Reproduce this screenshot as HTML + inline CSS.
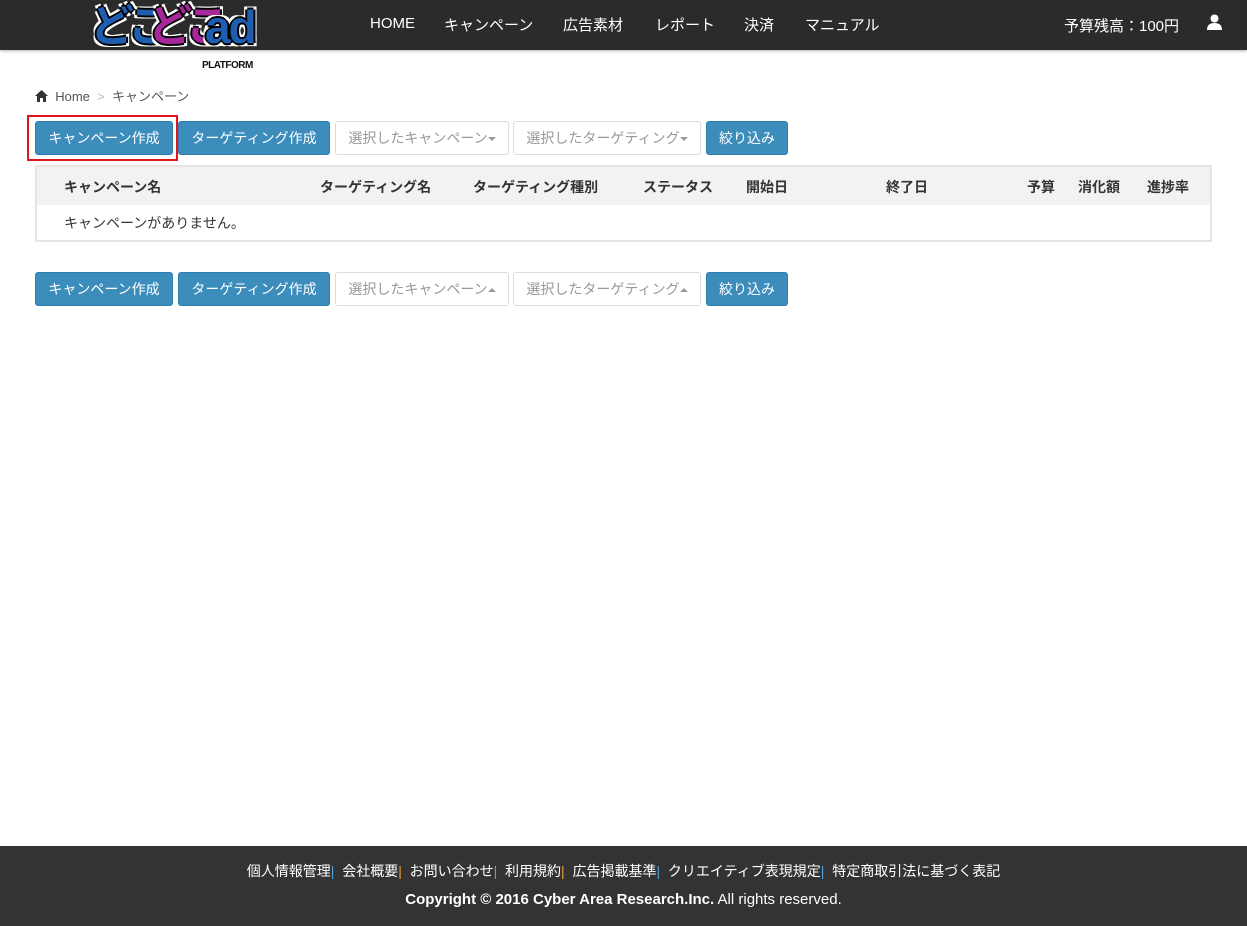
<!DOCTYPE html>
<html><head><meta charset="utf-8"><style>
*{box-sizing:border-box;margin:0;padding:0}
body{width:1247px;height:926px;position:relative;background:#fff;font-family:"Liberation Sans","Noto Sans CJK JP",sans-serif;font-size:14px;color:#333;overflow:hidden}
.nav{position:absolute;left:0;top:0;width:1247px;height:50px;background:#2b2b2b;box-shadow:0 1px 3px rgba(0,0,0,.3)}
.nav a{position:absolute;top:14px;color:#fff;font-size:15px}
.logo{position:absolute;left:86px;top:2px;height:68px;width:170px}
.logo .t{position:absolute;top:0;font-weight:bold;font-size:44px;line-height:50px;letter-spacing:-5px;text-shadow:2px 0 #000,-2px 0 #000,0 2px #000,0 -2px #000,3px 3px #fff,-3px -3px #fff,3px -3px #fff,-3px 3px #fff}
.logo .p{position:absolute;left:116px;top:58px;font-size:10px;font-weight:bold;color:#111;letter-spacing:-.5px}
.bc{position:absolute;left:35px;top:86px;font-size:13px;color:#555}
.btn{position:absolute;height:34px;line-height:32px;border:1px solid #2f7fb0;background:#3c8dbc;color:#fff;border-radius:3px;font-size:14px;text-align:center}
.btn.w{background:#fff;border-color:#ddd;color:#999}
.car{display:inline-block;width:0;height:0;border-left:4px solid transparent;border-right:4px solid transparent;vertical-align:middle}
.tbl{position:absolute;left:35px;top:165px;width:1177px;height:77px;border:2px solid #e5e5e5}
.th{position:absolute;left:0;top:0;width:100%;height:38px;background:#f2f2f2}
.th span{position:absolute;top:10px;font-weight:bold;font-size:14px;color:#333}
.foot{position:absolute;left:0;top:846px;width:1247px;height:80px;background:#333;color:#fff;text-align:center}
</style></head><body>
<div class="nav">
 <div class="logo">
  <div class="t" style="left:4px;color:#1e5db0">どこ</div>
  <div class="t" style="left:62px;color:#a8279a">どこ</div>
  <div class="t" style="left:119px;color:#1e5db0;font-size:46px;letter-spacing:-2px">ad</div>
  <div class="p">PLATFORM</div>
 </div>
 <a style="left:370px;top:15px">HOME</a>
 <a style="left:444px">キャンペーン</a>
 <a style="left:563px">広告素材</a>
 <a style="left:655px">レポート</a>
 <a style="left:744px">決済</a>
 <a style="left:805px">マニュアル</a>
 <a style="left:1064px;top:15px;font-size:15px">予算残高：100円</a>
 <svg style="position:absolute;left:1207px;top:14px" width="15" height="16" viewBox="0 0 15 16"><circle cx="7.5" cy="4.5" r="4" fill="#fff"/><path d="M0 16 Q0 9 7.5 9 Q15 9 15 16Z" fill="#fff"/></svg>
</div>
<div class="bc"><svg width="13" height="12" viewBox="0 0 13 12" style="vertical-align:-1px"><path d="M6.5 0 L13 6 H11 V12 H8 V8 H5 V12 H2 V6 H0Z" fill="#333"/></svg>&nbsp; Home &nbsp;<span style="color:#bbb">&gt;</span>&nbsp; キャンペーン</div>

<div style="position:absolute;left:27px;top:115px;width:151px;height:46px;border:2px solid #e0141d"></div>
<div class="btn" style="left:35px;top:121px;width:138px">キャンペーン作成</div>
<div class="btn" style="left:178px;top:121px;width:152px">ターゲティング作成</div>
<div class="btn w" style="left:335px;top:121px;width:174px">選択したキャンペーン<span class="car" style="border-top:4px solid #999"></span></div>
<div class="btn w" style="left:513px;top:121px;width:188px">選択したターゲティング<span class="car" style="border-top:4px solid #999"></span></div>
<div class="btn" style="left:706px;top:121px;width:82px">絞り込み</div>

<div class="tbl"><div class="th">
<span style="left:27px">キャンペーン名</span><span style="left:283px">ターゲティング名</span><span style="left:436px">ターゲティング種別</span><span style="left:606px">ステータス</span><span style="left:709px">開始日</span><span style="left:849px">終了日</span><span style="left:990px">予算</span><span style="left:1041px">消化額</span><span style="left:1110px">進捗率</span></div>
<div style="position:absolute;left:27px;top:46px">キャンペーンがありません。</div></div>

<div class="btn" style="left:35px;top:272px;width:138px">キャンペーン作成</div>
<div class="btn" style="left:178px;top:272px;width:152px">ターゲティング作成</div>
<div class="btn w" style="left:335px;top:272px;width:174px">選択したキャンペーン<span class="car" style="border-bottom:4px solid #999"></span></div>
<div class="btn w" style="left:513px;top:272px;width:188px">選択したターゲティング<span class="car" style="border-bottom:4px solid #999"></span></div>
<div class="btn" style="left:706px;top:272px;width:82px">絞り込み</div>

<div class="foot">
<div style="position:absolute;left:0;width:100%;top:15px;font-size:14px">個人情報管理<span style="color:#4da3e0">|</span>&nbsp; 会社概要<span style="color:#f0a030">|</span>&nbsp; お問い合わせ<span style="color:#4da3e0">|</span>&nbsp; 利用規約<span style="color:#f0a030">|</span>&nbsp; 広告掲載基準<span style="color:#4da3e0">|</span>&nbsp; クリエイティブ表現規定<span style="color:#4da3e0">|</span>&nbsp; 特定商取引法に基づく表記</div>
<div style="position:absolute;left:0;width:100%;top:45px;font-size:15px"><b>Copyright © 2016 Cyber Area Research.Inc.</b> All rights reserved.</div>
</div>
</body></html>
